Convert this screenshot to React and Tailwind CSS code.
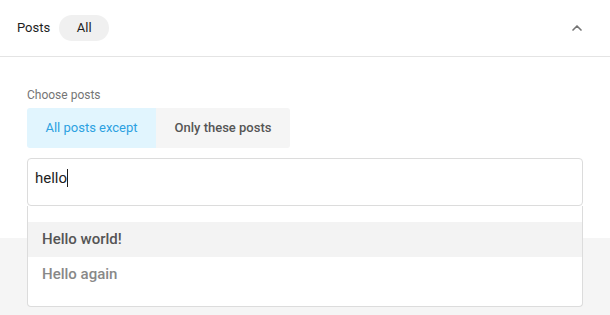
import { ChevronUp } from "lucide-react";

export default function App() {
  return (
    <div
      className="w-[610px] h-[315px] bg-[#f5f5f5] overflow-hidden"
      style={{ fontFamily: "Roboto, 'Liberation Sans', sans-serif" }}
    >
      <div className="bg-white">
        {/* header */}
        <div className="h-[57px] flex items-center pl-[17px] pr-[25px] border-b border-[#e4e4e4]">
          <span className="text-[13px] text-[#1e1e1e]">Posts</span>
          <span className="ml-[9px] w-[50px] h-[26px] rounded-full bg-[#f0f0f0] flex items-center justify-center text-[13px] text-[#1e1e1e]">
            All
          </span>
          <ChevronUp size={16} strokeWidth={2.5} className="ml-auto text-[#757575]" />
        </div>

        {/* body */}
        <div className="px-[27px] pt-[30px] h-[181px]">
          <div className="text-[12px] text-[#757575] leading-[16px]">Choose posts</div>
          <div className="mt-[5px] flex h-[40px]">
            <button className="w-[129px] rounded-l-[3px] bg-[#e1f5fe] text-[13px] text-[#2ca1e1]">
              All posts except
            </button>
            <button className="w-[134px] rounded-r-[3px] bg-[#f5f5f5] text-[13px] font-medium text-[#555]">
              Only these posts
            </button>
          </div>

          <div className="relative mt-[10px]">
            <div className="h-[48px] border border-[#dcdcdc] rounded-[4px] px-[7px] pt-[7px]">
              <span className="text-[15px] text-[#1e1e1e] leading-[20px]">hello</span>
              <span className="inline-block w-px h-[18px] bg-[#1e1e1e] align-[-4px]" />
            </div>
            <div className="absolute left-0 right-0 top-[48px] h-[101px] bg-white border border-t-0 border-[#dcdcdc] rounded-b-[4px] pt-[16px] z-10">
              <div className="h-[35px] bg-[#f3f3f3] flex items-center px-[14px] text-[15px] font-medium text-[#555]">
                Hello world!
              </div>
              <div className="h-[34px] flex items-center px-[14px] text-[15px] font-medium text-[#888]">
                Hello again
              </div>
            </div>
          </div>
        </div>
      </div>
    </div>
  );
}
